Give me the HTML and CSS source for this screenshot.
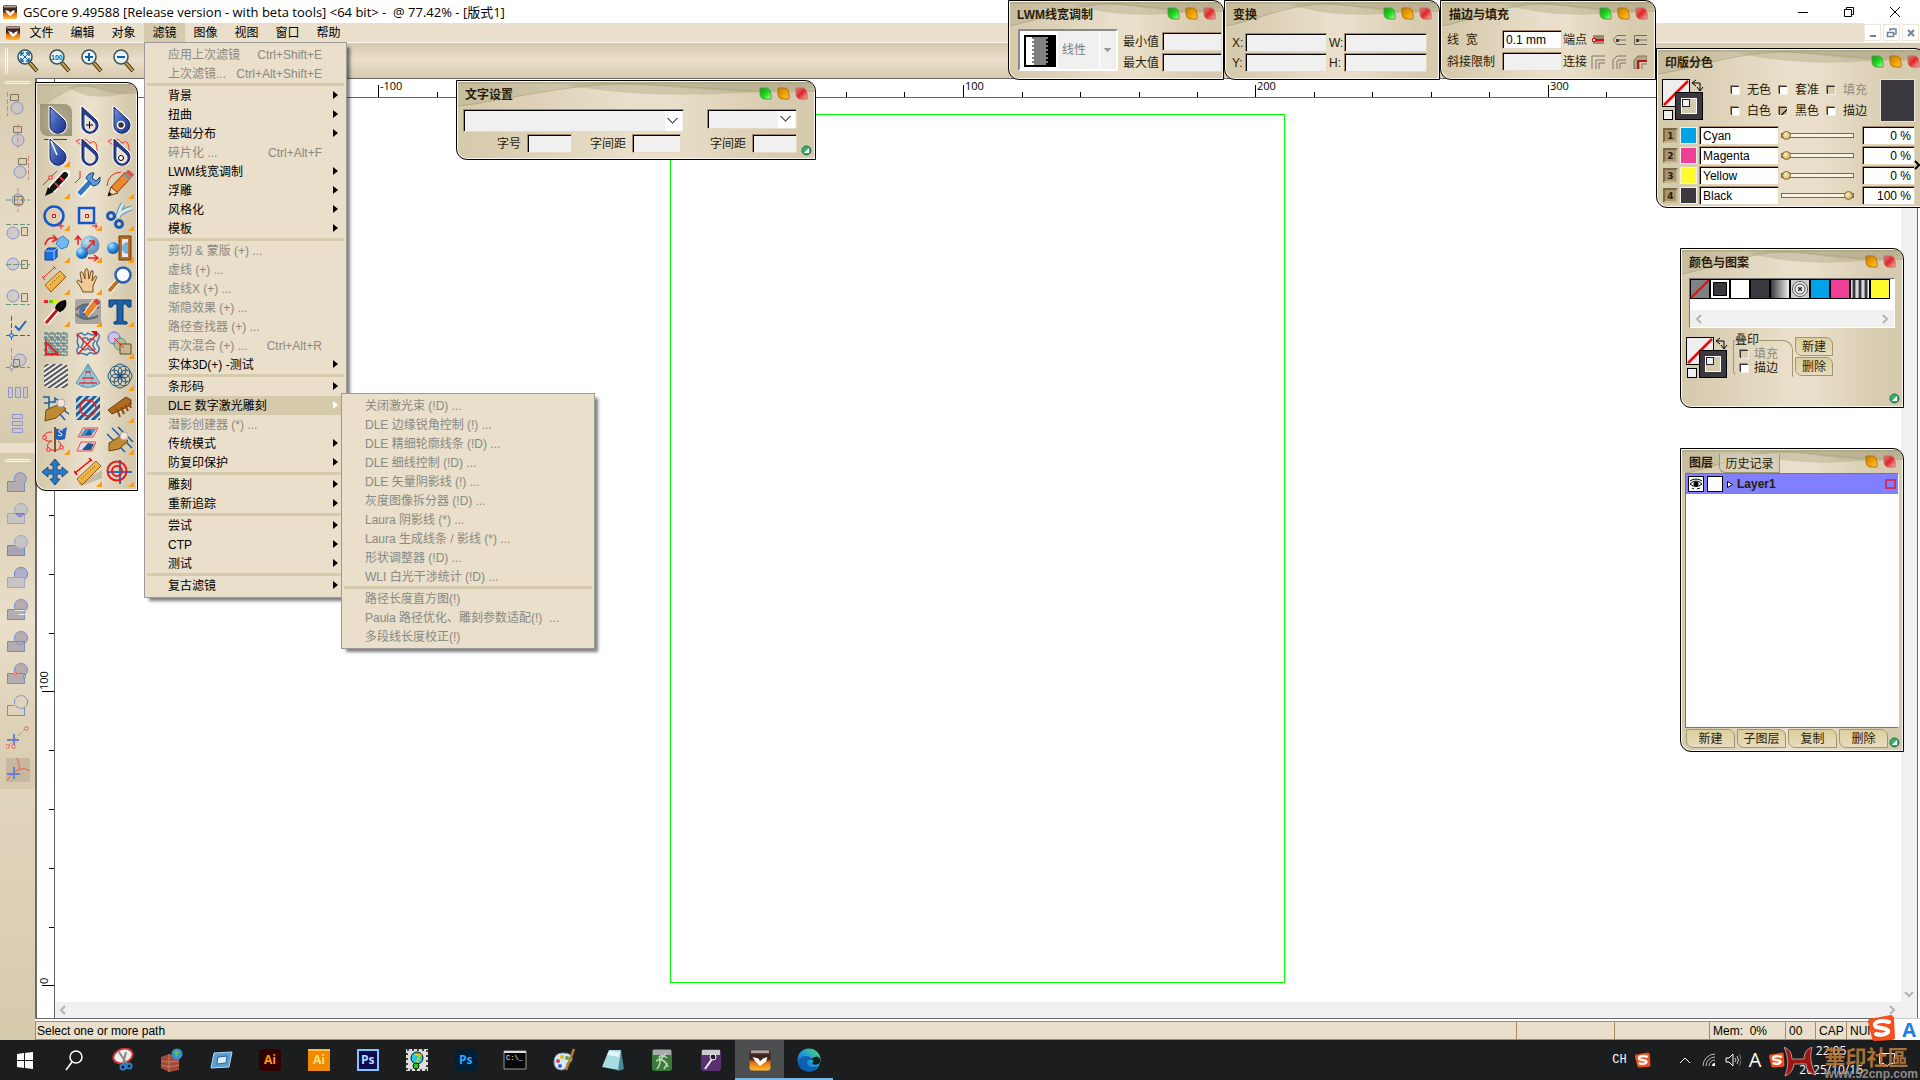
FILE: index.html
```html
<!DOCTYPE html>
<html lang="zh-CN">
<head>
  <meta charset="UTF-8" />
  <title>GSCore</title>
  <link rel="stylesheet" href="styles.css">
</head>
<body>

<!-- shared shapes -->
<svg class="defs" aria-hidden="true">
  <defs>
    <linearGradient id="gBlue" x1="0" y1="0" x2="1" y2="1"><stop offset="0" stop-color="#7a98e0"/><stop offset=".5" stop-color="#3c5cb4"/><stop offset="1" stop-color="#1c2f80"/></linearGradient>
    <linearGradient id="gGreen" x1="0" y1="0" x2="1" y2="1"><stop offset="0" stop-color="#0a9a10"/><stop offset=".6" stop-color="#22e022"/><stop offset="1" stop-color="#c8ffc0"/></linearGradient>
    <linearGradient id="gOrange" x1="0" y1="0" x2="1" y2="1"><stop offset="0" stop-color="#c87800"/><stop offset=".6" stop-color="#f5a400"/><stop offset="1" stop-color="#ffc94a"/></linearGradient>
    <linearGradient id="gRed" x1="0" y1="0" x2="1" y2="1"><stop offset="0" stop-color="#d98080"/><stop offset=".5" stop-color="#e02828"/><stop offset="1" stop-color="#ffb0b0"/></linearGradient>
    <linearGradient id="gApp" x1="0" y1="0" x2="0" y2="1"><stop offset="0" stop-color="#4a3030"/><stop offset=".45" stop-color="#3a2018"/><stop offset=".6" stop-color="#e06a10"/><stop offset="1" stop-color="#ffc030"/></linearGradient>
    <linearGradient id="gSteel" x1="0" y1="0" x2="1" y2="0"><stop offset="0" stop-color="#3a3840"/><stop offset="1" stop-color="#f0f0f0"/></linearGradient>
    <linearGradient id="gWood" x1="0" y1="0" x2="1" y2="1"><stop offset="0" stop-color="#ffdf80"/><stop offset="1" stop-color="#e08a10"/></linearGradient>
    <radialGradient id="gBall" cx=".35" cy=".3" r=".8"><stop offset="0" stop-color="#b8e4ff"/><stop offset=".5" stop-color="#2a8fdc"/><stop offset="1" stop-color="#0a4a98"/></radialGradient>
    <linearGradient id="gEdge" x1="0" y1="1" x2="1" y2="0"><stop offset="0" stop-color="#0c59a4"/><stop offset=".5" stop-color="#1b9de2"/><stop offset="1" stop-color="#5bd858"/></linearGradient>
    <pattern id="hatch" width="4" height="4" patternUnits="userSpaceOnUse" patternTransform="rotate(-35)"><rect width="4" height="4" fill="#eee"/><rect width="4" height="2" fill="#555"/></pattern>
    <pattern id="maze" width="6" height="6" patternUnits="userSpaceOnUse"><path d="M0 1h3v3h3M1 6V3M4 0v2h2" stroke="#2a6a80" fill="none"/></pattern>
    <pattern id="diag" width="5" height="5" patternUnits="userSpaceOnUse" patternTransform="rotate(-45)"><rect width="5" height="3" fill="#1760a8"/></pattern>
  </defs>
  <symbol id="wave" viewBox="0 0 200 26" preserveAspectRatio="none">
    <path d="M0 0H200V10C150 14 120 3 90 2C60 2 30 18 0 25Z" fill="#b5ad8c" opacity=".45"/>
    <path d="M60 3C100 16 140 16 200 6V0H80Z" fill="#a8a080" opacity=".4"/>
    <path d="M0 25C30 18 60 2 95 2C130 3 160 12 200 9" fill="none" stroke="#aca67e" opacity=".8"/>
    <path d="M0 1H200" stroke="#a8a078"/>
  </symbol>
  <symbol id="leafG" viewBox="0 0 13 13"><path d="M1 1h7q4 1 4 6v5H6Q1 12 1 6z" fill="url(#gGreen)" stroke="#5a9a4a"/></symbol>
  <symbol id="leafO" viewBox="0 0 13 13"><path d="M1 1h7q4 1 4 6v5H6Q1 12 1 6z" fill="url(#gOrange)" stroke="#a8741a"/></symbol>
  <symbol id="leafR" viewBox="0 0 13 13"><path d="M1 1h7q4 1 4 6v5H6Q1 12 1 6z" fill="url(#gRed)" stroke="#c06a60"/></symbol>
  <symbol id="gripDot" viewBox="0 0 11 11"><circle cx="5.5" cy="5.5" r="4.5" fill="#3bb070" stroke="#1c6a40"/><path d="M8 3v5H3z" fill="#fff"/></symbol>
  <symbol id="app" viewBox="0 0 16 16"><rect x="1" y="1" width="14" height="14" rx="2" fill="url(#gApp)"/><path d="M2 1.500h12v2H2z" fill="#b0a0a0"/><path d="M3 6l4 1 1 2 2-2 3-1-1 3-4 3-3-3z" fill="#fff"/></symbol>
  <symbol id="drop" viewBox="0 0 28 28"><path d="M8 1V20A8 8 0 1 0 22 14Z" fill="url(#gBlue)" stroke="#fff" stroke-width="3"/><path d="M8 1V20A8 8 0 1 0 22 14Z" fill="url(#gBlue)" stroke="#14205c"/></symbol>
  <symbol id="dropOpen" viewBox="0 0 28 28"><path d="M8 1V20A8 8 0 1 0 22 14Z" fill="#28408f" stroke="#fff" stroke-width="3"/><path d="M8 1V20A8 8 0 1 0 22 14Z" fill="#28408f" stroke="#14205c"/><path d="M11 9V20A5 5 0 1 0 19 16Z" fill="#e9dfca" stroke="#fff"/></symbol>
  <symbol id="lens" viewBox="0 0 24 24"><path d="M14 14l7 8" stroke="#2e2613" stroke-width="4"/><path d="M14 14l7 8" stroke="#c9a04a" stroke-width="2"/><circle cx="9" cy="8" r="7" fill="#e8f4fa" stroke="#3c5050" stroke-width="1.500"/></symbol>
  <symbol id="fillStroke" viewBox="0 0 42 42">
    <rect x=".5" y=".5" width="27" height="27" fill="#eee" stroke="#000"/><path d="M2 26L26 2" stroke="#f00" stroke-width="2.500"/>
    <rect x="13.500" y="13.500" width="27" height="27" fill="#3b383f" stroke="#000"/><rect x="19.500" y="19.500" width="15" height="15" fill="#d6caad" stroke="#fff"/><rect x="20.500" y="20.500" width="7" height="7" fill="#eee" stroke="#222"/>
    <rect x="1.500" y="31.500" width="9" height="9" fill="#eee" stroke="#000"/>
    <path d="M31 4h7v7M34 1l-4 3 4 3M35 8l3 4 3-4" fill="none" stroke="#000"/>
  </symbol>
  <symbol id="shape" viewBox="0 0 24 24"><circle cx="15" cy="8" r="6.500" /><path d="M1.500 11.500h17v10h-17z"/></symbol>
  <symbol id="sogou" viewBox="0 0 28 28"><path d="M1 5L23 1q2 0 3 3l1 19q0 3-3 3L7 27q-3 0-3-3L0 8q0-2 1-3z" fill="#f4511e"/><path d="M21 8q-7-2-12 0-4 2-1 5l10 2q4 2 1 4-4 3-11 1" fill="none" stroke="#fff" stroke-width="4" stroke-linecap="round"/></symbol>
  <symbol id="joinL" viewBox="0 0 14 14"><path d="M1 14V1H14M5 14V5H14M8 14V8H14" fill="none" stroke="currentColor"/></symbol>
</svg>

<div class="app">

<header class="titlebar">
  <svg class="app-icon"><use href="#app"/></svg>
  <h1>GSCore 9.49588 [Release version - with beta tools] &lt;64 bit&gt; -&nbsp; @ 77.42% - [版式1]</h1>
  <div class="window-buttons">
    <button aria-label="Minimize"><svg width="12" height="12"><path d="M1 6.500h10" stroke="#000"/></svg></button>
    <button aria-label="Restore"><svg width="12" height="12"><path d="M1.500 3.500h7v7h-7zM3.500 3V1.500h7v7H9" fill="none" stroke="#000"/></svg></button>
    <button aria-label="Close"><svg width="12" height="12"><path d="M1 1l10 10M11 1L1 11" stroke="#000"/></svg></button>
  </div>
</header>

<nav class="menubar">
  <svg class="app-icon"><use href="#app"/></svg>
  <a href="#">文件</a>
  <a href="#">编辑</a>
  <a href="#">对象</a>
  <div class="menu-holder">
    <a href="#" class="open">滤镜</a>
    <ul class="menu">
      <li class="off">应用上次滤镜<kbd>Ctrl+Shift+E</kbd></li>
      <li class="off">上次滤镜...<kbd>Ctrl+Alt+Shift+E</kbd></li>
      <li class="sep"></li>
      <li class="more">背景</li>
      <li class="more">扭曲</li>
      <li class="more">基础分布</li>
      <li class="off">碎片化 ...<kbd>Ctrl+Alt+F</kbd></li>
      <li class="more">LWM线宽调制</li>
      <li class="more">浮雕</li>
      <li class="more">风格化</li>
      <li class="more">模板</li>
      <li class="sep"></li>
      <li class="off">剪切 &amp; 蒙版 (+) ...</li>
      <li class="off">虚线 (+) ...</li>
      <li class="off">虚线X (+) ...</li>
      <li class="off">渐隐效果 (+) ...</li>
      <li class="off">路径查找器 (+) ...</li>
      <li class="off">再次混合 (+) ...<kbd>Ctrl+Alt+R</kbd></li>
      <li class="more">实体3D(+) -测试</li>
      <li class="sep"></li>
      <li class="more">条形码</li>
      <li class="more active">DLE 数字激光雕刻
        <ul class="menu submenu">
          <li>关闭激光束 (!D) ...</li>
          <li>DLE 边缘锐角控制 (!) ...</li>
          <li>DLE 精细轮廓线条 (!D) ...</li>
          <li>DLE 细线控制 (!D) ...</li>
          <li>DLE 矢量阴影线 (!) ...</li>
          <li>灰度图像拆分器 (!D) ...</li>
          <li>Laura 阴影线 (*) ...</li>
          <li>Laura 生成线条 / 影线 (*) ...</li>
          <li>形状调整器 (!D) ...</li>
          <li>WLI 白光干涉统计 (!D) ...</li>
          <li class="sep"></li>
          <li>路径长度直方图(!)</li>
          <li>Paula 路径优化、雕刻参数适配(!) &nbsp;...</li>
          <li>多段线长度校正(!)</li>
        </ul>
      </li>
      <li class="off">潜影创建器 (*) ...</li>
      <li class="more">传统模式</li>
      <li class="more">防复印保护</li>
      <li class="sep"></li>
      <li class="more">雕刻</li>
      <li class="more">重新追踪</li>
      <li class="sep"></li>
      <li class="more">尝试</li>
      <li class="more">CTP</li>
      <li class="more">测试</li>
      <li class="sep"></li>
      <li class="more">复古滤镜</li>
    </ul>
  </div>
  <a href="#">图像</a>
  <a href="#">视图</a>
  <a href="#">窗口</a>
  <a href="#">帮助</a>
  <div class="mdi-buttons">
    <button aria-label="Minimize document"><svg width="12" height="12"><path d="M3 9h6" stroke="#6f8296" stroke-width="2"/></svg></button>
    <button aria-label="Restore document"><svg width="12" height="12"><path d="M1.500 5.500h6v4h-6zM4 4V2h6v5H8" fill="none" stroke="#6f8296" stroke-width="1.500"/></svg></button>
    <button aria-label="Close document"><svg width="12" height="12"><path d="M3 3l6 6M9 3l-6 6" stroke="#6f8296" stroke-width="2"/></svg></button>
  </div>
</nav>

<div class="toolbar">
  <span class="handle-v"></span>
  <button aria-label="Fit"><svg class="i24"><use href="#lens"/><path d="M6 5l6 6M12 5l-6 6" stroke="#0a62b8"/><path d="M5 7V4h3M10 4h3v3M13 9v3h-3M8 12H5V9" fill="none" stroke="#0a62b8" stroke-width="1.500"/></svg></button>
  <button aria-label="100%"><svg class="i24"><use href="#lens"/><text x="3" y="11" class="lens-text">100</text></svg></button>
  <button aria-label="Zoom in"><svg class="i24"><use href="#lens"/><path d="M5 8h8M9 4v8" stroke="#0a62b8" stroke-width="2"/></svg></button>
  <button aria-label="Zoom out"><svg class="i24"><use href="#lens"/><path d="M5 8h8" stroke="#0a62b8" stroke-width="2"/></svg></button>
</div>

<div class="middle">
  <aside class="dock">
    <div class="dock-group align">
      <span class="handle-h"></span>
      <button aria-label="Align left"><svg class="i24"><path d="M1.500 0V24" class="dash-r"/><path d="M4.500 2.500h8v6h-8z" class="box"/><circle cx="11" cy="16" r="6" class="ball"/></svg></button>
      <button aria-label="Align centre"><svg class="i24"><path d="M7.500 2.500h8v6h-8z" class="box"/><circle cx="12" cy="16" r="6" class="ball"/><path d="M12 0V24" class="dash-r"/></svg></button>
      <button aria-label="Align right"><svg class="i24"><path d="M22.500 0V24" class="dash-r"/><path d="M12.500 2.500h8v6h-8z" class="box"/><circle cx="14" cy="16" r="6" class="ball"/></svg></button>
      <button aria-label="Align both"><svg class="i24"><circle cx="12" cy="12" r="6" class="ball"/><path d="M8.500 8.500h8v8h-8z" class="box"/><path d="M12 0V24" class="dash-r"/><path d="M0 12H24" class="dash-g"/></svg></button>
      <button aria-label="Align top"><svg class="i24"><path d="M0 4.500H24" class="dash-g"/><circle cx="7" cy="13" r="6" class="ball"/><path d="M15.500 7.500h6v8h-6z" class="box"/></svg></button>
      <button aria-label="Align middle"><svg class="i24"><circle cx="7" cy="12" r="6" class="ball"/><path d="M15.500 8.500h6v8h-6z" class="box"/><path d="M0 12.500H24" class="dash-g"/></svg></button>
      <button aria-label="Align bottom"><svg class="i24"><path d="M0 20.500H24" class="dash-g"/><circle cx="7" cy="12" r="6" class="ball"/><path d="M15.500 9.500h6v8h-6z" class="box"/></svg></button>
      <button aria-label="Snap"><svg class="i24"><path d="M5.500 0V24" class="dash-r strong"/><path d="M0 19.500H24" class="dash-g strong"/><path d="M9 10l4 4 7-9" fill="none" stroke="#2a62c0" stroke-width="2"/><path d="M4 18h3v3H4z" fill="#fff" stroke="#06c"/></svg></button>
      <button aria-label="Snap object"><svg class="i24"><path d="M5.500 0V24" class="dash-r"/><path d="M0 19.500H24" class="dash-g"/><circle cx="14" cy="12" r="6" class="ball"/><path d="M7.500 11.500h6v7h-6z" class="box"/><path d="M4 18h3v3H4z" fill="#fff" stroke="#88a"/></svg></button>
      <button aria-label="Distribute horizontally"><svg class="i24"><path d="M2.500 7.500h4v10h-4zM9.500 7.500h5v10h-5zM17.500 7.500h4v10h-4z" class="lav"/></svg></button>
      <button aria-label="Distribute vertically"><svg class="i24"><path d="M6.500 2.500h10v4h-10zM6.500 9.500h10v4h-10zM6.500 16.500h10v4h-10z" class="lav"/></svg></button>
    </div>
    <div class="dock-group paths">
      <span class="handle-h"></span>
      <button aria-label="Unite"><svg class="i24 solid"><path d="M1.500 11.500H9A6 6 0 1 1 18.500 13V21.500H1.500z"/></svg></button>
      <button aria-label="Intersect"><svg class="i24 pale"><use href="#shape"/><path d="M10 11.500h8.500q-5 6-8.500 0z" fill="#9a9ad0" stroke="#6878d0"/></svg></button>
      <button aria-label="Subtract front"><svg class="i24 pale"><path d="M1.500 11.500h17v10h-17z" fill="#a8a4b4" stroke="#7080d0"/><circle cx="15" cy="8" r="6.500"/></svg></button>
      <button aria-label="Subtract back"><svg class="i24 pale"><circle cx="15" cy="8" r="6.500" fill="#aeb0cc" stroke="#7080d0"/><path d="M1.500 11.500h17v10h-17z"/></svg></button>
      <button aria-label="Exclude"><svg class="i24 solid"><use href="#shape"/><path d="M9 12.500h10M12 16.500h7" stroke="#eee"/></svg></button>
      <button aria-label="Divide"><svg class="i24 solid"><use href="#shape"/><path d="M10 12q4 5 9 0" fill="none"/></svg></button>
      <button aria-label="Add points"><svg class="i24 solid"><use href="#shape"/><path d="M8.500 10.500h2v2h-2zM17.500 13.500h2v2h-2z" fill="#fff" stroke="#f06050"/></svg></button>
      <button aria-label="Outline"><svg class="i24 solid"><g fill="none"><path d="M8 11.500H1.500v10h17V13"/><circle cx="15" cy="8" r="6.500" stroke-dasharray="5 1"/></g></svg></button>
      <button aria-label="Cut path"><svg class="i24"><path d="M2 20L20 2" class="dash-r"/><path d="M1 14h12M8 8v12" stroke="#7080d0" stroke-width="2"/><path d="M19 1h3v3h-3zM0 19h3v3H0zM6 19h3v3H6z" fill="#eee" stroke="#f06050"/></svg></button>
      <button aria-label="Cut curve"><svg class="i24 cut"><path d="M11 0q4 9 1 12-6 2-11 11M12 12q6-3 12 1" fill="none" stroke="#f06050"/><path d="M1 16h13M8 9v12" stroke="#7080d0" stroke-width="2"/></svg></button>
    </div>
    <div class="dock-rest"></div>
  </aside>

  <div class="work">
    <main class="view">
      <div class="corner"></div>
      <svg class="ruler-h">
        <path d="M30.500 6V18M323.500 6V18M615.500 6V18M908.500 6V18M1200.500 6V18M1493.500 6V18M1785.500 6V18M89.500 13V18M147.500 13V18M206.500 13V18M264.500 13V18M382.500 13V18M440.500 13V18M499.500 13V18M557.500 13V18M674.500 13V18M732.500 13V18M791.500 13V18M849.500 13V18M967.500 13V18M1025.500 13V18M1084.500 13V18M1142.500 13V18M1259.500 13V18M1317.500 13V18M1376.500 13V18M1434.500 13V18M1551.500 13V18M1610.500 13V18M1668.500 13V18M1727.500 13V18" stroke="#000"/>
        <text x="32" y="11">-200</text><text x="325" y="11">-100</text><text x="617" y="11">0</text><text x="910" y="11">100</text><text x="1202" y="11">200</text><text x="1495" y="11">300</text>
      </svg>
      <svg class="ruler-v">
        <path d="M5 593.500H17M5 887.500H17M12 417.500H17M12 476.500H17M12 535.500H17M12 652.500H17M12 711.500H17M12 770.500H17M12 829.500H17" stroke="#000"/>
        <text transform="translate(11 592) rotate(-90)">100</text><text transform="translate(11 886) rotate(-90)">0</text>
      </svg>
      <section class="canvas"><div class="page"></div></section>
      <div class="vscroll"><svg width="10" height="10"><path d="M1 3l4 4 4-4" class="chev"/></svg></div>
      <div class="hscroll">
        <svg width="10" height="10"><path d="M7 1L3 5l4 4" class="chev"/></svg>
        <svg width="10" height="10"><path d="M3 1l4 4-4 4" class="chev"/></svg>
      </div>
    </main>
    <footer class="statusbar">
      <span class="msg">Select one or more path</span>
      <span class="s98"></span>
      <span class="s95"></span>
      <span class="s76">Mem:&nbsp; 0%</span>
      <span class="s30">00</span>
      <span class="s31">CAP</span>
      <span class="s73">NUM</span>
    </footer>
  </div>
</div>

<!-- floating palettes -->
<section class="panel tools">
  <header><svg class="wave"><use href="#wave"/></svg></header>
  <div class="tool-grid">
    <button class="on" aria-label="Select"><svg><use href="#drop"/></svg></button>
    <button aria-label="Group select"><svg><use href="#dropOpen"/><path d="M12 19h7M15.500 15.500v7" stroke="#000"/></svg></button>
    <button aria-label="Object select"><svg><use href="#drop"/><circle cx="15" cy="19" r="3.500" fill="#333" stroke="#fff" stroke-width="1.500"/></svg></button>

    <button aria-label="Line edit"><svg><path d="M2 1.500H25" stroke="#e00"/><use href="#drop"/><path d="M9 3l6 14" stroke="#fff" stroke-width="1.500"/></svg><i></i></button>
    <button aria-label="Node edit"><svg><path d="M2 3q9-5 14 2-6 6-14-2M16 5q8-6 7 12" fill="none" stroke="#f33"/><use href="#dropOpen"/></svg></button>
    <button aria-label="Node ring"><svg><path d="M2 3q9-5 14 2-6 6-14-2M16 5q8-6 7 12" fill="none" stroke="#f33"/><use href="#dropOpen"/><circle cx="15" cy="20" r="2.500" fill="#fff" stroke="#000"/></svg></button>

    <button aria-label="Pen"><svg><path d="M1 15L15 1" stroke="#e22"/><path d="M7 6h3v3H7z" fill="#fff" stroke="#e22"/><path d="M24 4L10 19" stroke="#fff" stroke-width="9" stroke-linecap="round"/><path d="M23 5L11 18" stroke="#151515" stroke-width="6" stroke-linecap="round"/><path d="M13 13l4 4M18 7l4 4" stroke="#e33" stroke-width="2"/><path d="M3 26l3-9 6 5z" fill="#111"/></svg><i></i></button>
    <button aria-label="Wrench"><svg><path d="M6 1v7L1 13" fill="none" stroke="#e22"/><path d="M5 25L17 11" stroke="#fff" stroke-width="8"/><path d="M5 24L17 11" stroke="#3878c0" stroke-width="5"/><path d="M12 8q3-6 8-5l-2 5 4 3 4-4q1 8-7 9z" fill="#5a9ae0" stroke="#20406a"/></svg></button>
    <button aria-label="Pencil"><svg><path d="M1 16Q2 3 15 2" fill="none" stroke="#e22"/><path d="M22 5L8 20" stroke="#8a4a10" stroke-width="9"/><path d="M21 6L8 20" stroke="#f08a28" stroke-width="7"/><path d="M18 5l5 5M20 3l5 5" stroke="#8a98a0" stroke-width="2"/><path d="M21 1l6 5" stroke="#d85050" stroke-width="4"/><path d="M2 26l3-9 7 6z" fill="#f6d8a8" stroke="#5a3a10"/><path d="M2 26l1-4 3 2z"/></svg><i></i></button>

    <button aria-label="Ellipse"><svg><circle cx="12" cy="14" r="9.500" fill="none" stroke="#1557c8" stroke-width="2.500"/><path d="M10.500 12.500h3v3h-3z" fill="#fff" stroke="#e00"/><path d="M16 24h6M19 21v6" stroke="#e22"/></svg><i></i></button>
    <button aria-label="Rectangle"><svg><path d="M5 6h15v15H5z" fill="none" stroke="#1557c8" stroke-width="2.500"/><path d="M11.500 12.500h3v3h-3z" fill="#fff" stroke="#e00"/><path d="M18 24h6M22 21v6" stroke="#e22"/></svg><i></i></button>
    <button aria-label="Scissors"><svg><path d="M17 2q-4 6-5 14M26 6q-9 2-15 9" stroke="#6a94a0" stroke-width="5" fill="none"/><path d="M17 2q-4 6-5 14M26 6q-9 2-15 9" stroke="#d8e8ea" stroke-width="3" fill="none"/><circle cx="5" cy="14" r="3.500" fill="none" stroke="#1c58b8" stroke-width="3"/><circle cx="13" cy="22" r="3.500" fill="none" stroke="#1c58b8" stroke-width="3"/></svg><i></i></button>

    <button aria-label="Rotate"><svg><path d="M3 11Q6 1 14 5M11 1l4 4-5 3" fill="none" stroke="#e22" stroke-width="1.500"/><path d="M16 5l5-3 6 5-2 6-6 2-5-5z" fill="#70b8f0" stroke="#3a80c0"/><path d="M3 17l3-3h9v9l-3 3H3z" fill="#1a70e0" stroke="#0a3a90"/><path d="M3 17h9v9M12 17l3-3" fill="none" stroke="#a0d0ff"/></svg><i></i></button>
    <button aria-label="Scale"><svg><circle cx="16" cy="11" r="9.500" fill="url(#gBall)" opacity=".6"/><circle cx="8" cy="19" r="6" fill="url(#gBall)"/><path d="M4 11V3M1 6l3-4 3 4M12 16l7-8M15 7h5v5M14 24h10M20 21l4 3-4 3" fill="none" stroke="#e22" stroke-width="1.500"/></svg><i></i></button>
    <button aria-label="Mirror"><svg><path d="M13 2h12v24H13z" fill="#b86a24" stroke="#6a3a10"/><path d="M16 5h6v18h-6z" fill="#e8eaf0"/><circle cx="7" cy="14" r="6" fill="url(#gBall)"/><path d="M22 8a6 6 0 0 0 0 12z" fill="#70b0e0"/></svg><i></i></button>

    <button aria-label="Ruler"><svg><path d="M1 12L13 1M0 10l3 4M11 0l3 3" stroke="#e22"/><path d="M3 19L18 5l6 6L9 26z" fill="url(#gWood)" stroke="#a05a10"/><path d="M8 19l10-10" stroke="#503000" stroke-dasharray="1 2"/></svg><i></i></button>
    <button aria-label="Hand"><svg><path d="M9 26q-2-5-6-10 0-3 3-1l2 2L6 7q1-3 3 0l2 6V4q2-3 3 0l1 9 2-8q3-1 2 2l-1 8 3-5q3 0 1 3l-3 7v6z" fill="#f0cc94" stroke="#704a20"/></svg><i></i></button>
    <button aria-label="Zoom"><svg><path d="M12 15L3 25" stroke="#fff" stroke-width="6"/><path d="M12 15L3 25" stroke="#c07020" stroke-width="4"/><circle cx="17" cy="9" r="7.500" fill="#f4faff" stroke="#2a60b0" stroke-width="2.500"/></svg></button>

    <button aria-label="Eyedropper"><svg><path d="M2 2h4v3H2z" fill="#e22"/><path d="M7 2h4v3H7z" fill="#5c2"/><path d="M12 2h4v3h-4z" fill="#ee0"/><path d="M4 25l12-14" stroke="#fff" stroke-width="6"/><path d="M4 25l12-14" stroke="#c01818" stroke-width="3"/><path d="M14 10q2-6 9-7 2 6-5 10z" fill="#111" stroke="#000" stroke-width="2"/></svg><i></i></button>
    <button aria-label="Image edit"><svg><rect x="1" y="1" width="26" height="25" rx="3" fill="#a8a49e"/><circle cx="12" cy="14" r="7" fill="#5478a8"/><circle cx="12" cy="14" r="3"/><path d="M2 12Q10 2 25 10M2 16q9 9 22 2" fill="none" stroke="#666" stroke-width="2"/><path d="M22 4L12 17" stroke="#fff" stroke-width="8"/><path d="M22 4L12 17" stroke="#e8862a" stroke-width="6"/><path d="M21 2l4 4" stroke="#d04040" stroke-width="4"/></svg><i></i></button>
    <button aria-label="Text"><svg><path d="M3 2h22v7h-3l-2-3h-3v17l4 1v2H8v-2l3-1V6H8L6 9H3z" fill="#1c60a8" stroke="#0c3a70"/></svg><i></i></button>

    <button aria-label="Pattern"><svg><path d="M2 2h24v24H2z" fill="url(#maze)"/><path d="M4 12v12h12z" fill="none" stroke="#e22" stroke-width="2"/></svg></button>
    <button aria-label="Pattern erase"><svg fill="none"><path d="M4 8q-3-5 4-5 2 4 6 0 5 4 9 0 4 2 1 7-3 4 1 7 1 6-5 7-4-3-7 1-6-3-9-1-3-4 1-7-3-5-1-9zM8 9q5-3 6 1 5-3 7 1-4 4 0 8-5 3-7-1-4 4-7-1 4-4 1-8z" stroke="#3c7cb0" stroke-width="1.500"/><path d="M3 4l20 20M24 3L4 24" stroke="#e22" stroke-width="1.500"/><path d="M17 1h6v6z" fill="#e00"/></svg></button>
    <button aria-label="Blend"><svg><circle cx="8" cy="8" r="6" fill="#c8c4ec" stroke="#6a70c8"/><circle cx="14" cy="14" r="6" fill="#a0c0a0" opacity=".8" stroke="#408050"/><path d="M14 14h11v10H14z" fill="#c8b890" stroke="#604a20"/><path d="M8 8l10 10" stroke="#e22"/></svg><i></i></button>

    <button aria-label="Hatching"><svg><rect x="2" y="2" width="24" height="24" rx="4" fill="url(#hatch)"/></svg></button>
    <button aria-label="Cone"><svg><path d="M14 2L26 21q-12 9-24 0z" fill="#8ac4dc" opacity=".8" stroke="#3a80a8"/><path d="M14 2L9 24M14 2l5 22" stroke="#5aa0c0"/><path d="M11 10h6M8 16h12M5 21h18" stroke="#e33" stroke-width="1.500"/></svg></button>
    <button aria-label="Guilloche"><svg fill="none" stroke="#1e527c"><circle cx="14" cy="8" r="6"/><circle cx="14" cy="20" r="6"/><circle cx="8" cy="14" r="6"/><circle cx="20" cy="14" r="6"/><circle cx="10" cy="10" r="6"/><circle cx="18" cy="10" r="6"/><circle cx="10" cy="18" r="6"/><circle cx="18" cy="18" r="6"/></svg><i></i></button>

    <button aria-label="Smudge"><svg><path d="M1 3h6v5h6V4l6 5v5l8 6M2 9h5v5M18 20l5 6" fill="none" stroke="#1760a8" stroke-width="1.500"/><path d="M4 16l14-6 6 5-10 9-11 3z" fill="#c08a34" stroke="#6a4810"/><circle cx="19" cy="9" r="4" fill="#f8e4dc" stroke="#aaa"/></svg></button>
    <button aria-label="Line region"><svg><path d="M2 2h24v24H2z" fill="url(#diag)"/><circle cx="14" cy="14" r="8" fill="none" stroke="#e22" stroke-width="1.500"/></svg></button>
    <button aria-label="Comb"><svg><path d="M2 16L20 3l5 3v5L6 20z" fill="#b06a20" stroke="#6a3a08"/><path d="M11 15l3 8M15 13l3 7M19 11l3 6M23 9l2 5" stroke="#8a4a10" stroke-width="2"/></svg><i></i></button>

    <button aria-label="Flag"><svg><path d="M13 1v25" stroke="#805030" stroke-width="2"/><path d="M13 2q6 3 12-1l-2 12q-5 2-10 0z" fill="#2060b8"/><path d="M21 4q-5-1-4 2l3 2q0 3-4 1" fill="none" stroke="#fff"/><path d="M10 6q-8 0-8 5t8 4q-7 2-3 9h9q6-5 0-9" fill="none" stroke="#e22"/><path d="M1 10h3v3H1zM5 22h3v3H5zM18 20h3v3h-3z" fill="#fff" stroke="#e22"/></svg><i></i></button>
    <button aria-label="Distort"><svg><path d="M9 2h15l-5 9H4zM7 16h15l-4 9H3z" fill="#d8e0ec" stroke="#e44"/><path d="M11 3h11l-5 7H6z" fill="#4a90c0"/><path d="M8 24l6-7 6 1-3 6z" fill="#1a5a90"/><path d="M11 9l5-6 2 6z" fill="#1a5a90"/></svg></button>
    <button aria-label="Smear lines"><svg><path d="M6 2l20 20M12 1l15 15M1 8l18 18" stroke="#1760a8" stroke-width="1.500"/><path d="M3 17l13-8 6 6-9 8-10 2z" fill="#c08a34" stroke="#6a4810"/><circle cx="18" cy="10" r="4" fill="#f8e4dc" stroke="#aaa"/></svg><i></i></button>

    <button aria-label="Move"><svg><path d="M13 1l5 6h-3v5h5V9l6 5-6 5v-3h-5v5h3l-5 6-5-6h3v-5H6v3l-6-5 6-5v3h5V7H8z" fill="#2a78c8" stroke="#174a80"/></svg></button>
    <button aria-label="Measure"><svg><path d="M4 26L28 12v8L8 28z" fill="#8a8a70" opacity=".4"/><path d="M1 15L17 2M0 13l3 4M15 0l3 3" stroke="#e00" stroke-width="1.500"/><path d="M3 21L22 3l5 5L8 27z" fill="url(#gWood)" stroke="#a05a10"/><path d="M7 21L21 8" stroke="#503000" stroke-dasharray="1 2"/></svg><i></i></button>
    <button aria-label="Register"><svg><path d="M2 14h24M14 2v24" stroke="#2a70c8" stroke-width="2"/><circle cx="11" cy="13" r="9.500" fill="none" stroke="#e81818" stroke-width="2"/><circle cx="11" cy="13" r="5" fill="none" stroke="#e81818" stroke-width="2"/></svg><i></i></button>
  </div>
</section>

<section class="panel text-panel">
  <header><svg class="wave"><use href="#wave"/></svg><h2>文字设置</h2><button aria-label="Pin"><svg><use href="#leafG"/></svg></button><button aria-label="Roll up"><svg><use href="#leafO"/></svg></button><button aria-label="Close"><svg><use href="#leafR"/></svg></button></header>
  <div class="text-row">
    <select class="combo font" aria-label="Font"><option></option></select>
    <select class="combo style" aria-label="Style"><option></option></select>
  </div>
  <div class="text-row fields">
    <label>字号 <input type="text"></label>
    <label>字间距 <input type="text"></label>
    <label>字间距 <input type="text"></label>
  </div>
  <svg class="grip"><use href="#gripDot"/></svg>
</section>

<section class="panel lwm">
  <header><svg class="wave"><use href="#wave"/></svg><h2>LWM线宽调制</h2><button aria-label="Pin"><svg><use href="#leafG"/></svg></button><button aria-label="Roll up"><svg><use href="#leafO"/></svg></button><button aria-label="Close"><svg><use href="#leafR"/></svg></button></header>
  <div class="lwm-body">
    <div class="mode">
      <svg width="38" height="38"><rect width="38" height="38" fill="#fff"/><rect x="4" y="4" width="32" height="32" fill="#000"/><rect x="6" y="6" width="10" height="28" fill="#fff"/><path d="M14 6h12v28H14z" fill="#808080"/><path d="M13 6v28" stroke="#808080" stroke-width="2" stroke-dasharray="2 2"/><path d="M27 6v28" stroke="#808080" stroke-width="2" stroke-dasharray="2 2"/></svg>
      <select aria-label="Mode"><option>线性</option></select>
    </div>
    <div class="pairs">
      <label>最小值 <input type="text"></label>
      <label>最大值 <input type="text"></label>
    </div>
  </div>
</section>

<section class="panel transform">
  <header><svg class="wave"><use href="#wave"/></svg><h2>变换</h2><button aria-label="Pin"><svg><use href="#leafG"/></svg></button><button aria-label="Roll up"><svg><use href="#leafO"/></svg></button><button aria-label="Close"><svg><use href="#leafR"/></svg></button></header>
  <div class="xywh">
    <label for="tx">X:</label><input type="text" id="tx">
    <label for="tw">W:</label><input type="text" id="tw">
    <label for="ty">Y:</label><input type="text" id="ty">
    <label for="th">H:</label><input type="text" id="th">
  </div>
</section>

<section class="panel stroke">
  <header><svg class="wave"><use href="#wave"/></svg><h2>描边与填充</h2><button aria-label="Pin"><svg><use href="#leafG"/></svg></button><button aria-label="Roll up"><svg><use href="#leafO"/></svg></button><button aria-label="Close"><svg><use href="#leafR"/></svg></button></header>
  <div class="stroke-grid">
    <label for="lw">线&nbsp; 宽</label><input type="text" id="lw" class="live" value="0.1 mm">
    <span>端点</span>
    <button aria-label="Butt cap"><svg width="14" height="14"><path d="M2 2h11v9H2z" fill="#9a8a78"/><path d="M2 7h11" stroke="#e00" stroke-width="2"/><path d="M1.500 5.500h3v3h-3z" fill="#fff" stroke="#e00"/></svg></button>
    <button aria-label="Round cap"><svg width="14" height="14"><path d="M14 2.500H5L1 7l4 4.500h9M4 7h10" fill="none" stroke="#7a6a5a"/><path d="M4 6h3v3H4z" fill="#345"/></svg></button>
    <button aria-label="Square cap"><svg width="14" height="14"><path d="M14 2.500H1.500v9H14M4 7h10" fill="none" stroke="#7a6a5a"/><path d="M3 6h3v3H3z" fill="#345"/></svg></button>
    <label for="ml">斜接限制</label><input type="text" id="ml">
    <span>连接</span>
    <button aria-label="Miter join"><svg class="join"><use href="#joinL"/></svg></button>
    <button aria-label="Round join"><svg class="join"><path d="M1 14V5l4-4h9M5 14V6l1-1h8M8 14V8h6" fill="none" stroke="currentColor"/></svg></button>
    <button aria-label="Bevel join"><svg class="join"><path d="M1 14V5l4-4h9v5H6v8z" fill="#b0a48c" stroke="currentColor"/><path d="M5 14V6h9" fill="none" stroke="#b01818" stroke-width="2"/><path d="M9 14V9h5" fill="none" stroke="currentColor"/></svg></button>
  </div>
</section>

<section class="panel plates">
  <header><svg class="wave"><use href="#wave"/></svg><h2>印版分色</h2><button aria-label="Pin"><svg><use href="#leafG"/></svg></button><button aria-label="Roll up"><svg><use href="#leafO"/></svg></button><button aria-label="Close"><svg><use href="#leafR"/></svg></button></header>
  <div class="plates-top">
    <svg class="fs"><use href="#fillStroke"/></svg>
    <div class="checks">
      <label><input type="checkbox">无色</label>
      <label><input type="checkbox">套准</label>
      <label class="dim"><input type="checkbox" disabled>填充</label>
      <label><input type="checkbox">白色</label>
      <label><input type="checkbox" checked>黑色</label>
      <label><input type="checkbox">描边</label>
    </div>
    <span class="current"></span>
  </div>
  <div class="inks">
    <button>1</button><span class="chip cyan"></span><input type="text" class="live" value="Cyan" aria-label="Ink 1"><input type="range" value="0" aria-label="Cyan amount"><input type="text" class="live num" value="0 %" aria-label="Cyan percent">
    <button>2</button><span class="chip magenta"></span><input type="text" class="live" value="Magenta" aria-label="Ink 2"><input type="range" value="0" aria-label="Magenta amount"><input type="text" class="live num" value="0 %" aria-label="Magenta percent">
    <button>3</button><span class="chip yellow"></span><input type="text" class="live" value="Yellow" aria-label="Ink 3"><input type="range" value="0" aria-label="Yellow amount"><input type="text" class="live num" value="0 %" aria-label="Yellow percent">
    <button>4</button><span class="chip black"></span><input type="text" class="live" value="Black" aria-label="Ink 4"><input type="range" value="100" aria-label="Black amount"><input type="text" class="live num" value="100 %" aria-label="Black percent">
  </div>
  <svg class="expand"><path d="M1 1l4 4-4 4" fill="none" stroke="#000" stroke-width="2"/></svg>
</section>

<section class="panel colors">
  <header><svg class="wave"><use href="#wave"/></svg><h2>颜色与图案</h2><button aria-label="Roll up"><svg><use href="#leafO"/></svg></button><button aria-label="Close"><svg><use href="#leafR"/></svg></button></header>
  <div class="swatch-box">
    <div class="swatches">
      <button aria-label="None"><svg><path d="M0 0h18v18H0z" fill="#808080"/><path d="M0 18L18 0" stroke="#f00" stroke-width="2"/></svg></button>
      <button aria-label="Registration"><svg><path d="M0 0h18v18H0z" fill="#fff"/><path d="M2.500 2.500h13v13h-13z" fill="#3b383f" stroke="#000"/></svg></button>
      <button class="white" aria-label="White"></button>
      <button class="black" aria-label="Black"></button>
      <button aria-label="Linear gradient"><svg><path d="M0 0h18v18H0z" fill="url(#gSteel)"/></svg></button>
      <button aria-label="Radial pattern"><svg><path d="M0 0h18v18H0z" fill="#ccc"/><circle cx="9" cy="9" r="7.500" fill="#fff" stroke="#555"/><circle cx="9" cy="9" r="5" fill="none" stroke="#777" stroke-width="1.500"/><circle cx="9" cy="9" r="2.500" fill="#888"/><path d="M7 7l4 4M11 7l-4 4" stroke="#333"/></svg></button>
      <button class="cyan" aria-label="Cyan"></button>
      <button class="magenta" aria-label="Magenta"></button>
      <button aria-label="Stripes"><svg><path d="M0 0h18v18H0z" fill="#f4f4f4"/><path d="M3 0v18M9 0v18M15 0v18" stroke="#3b383f" stroke-width="3"/><path d="M0 0v18M6 0v18M12 0v18" stroke="#bbb"/></svg></button>
      <button class="yellow" aria-label="Yellow"></button>
    </div>
    <div class="swatch-scroll">
      <svg width="10" height="10"><path d="M7 1L3 5l4 4" class="chev"/></svg>
      <svg width="10" height="10"><path d="M3 1l4 4-4 4" class="chev"/></svg>
    </div>
  </div>
  <div class="colors-bottom">
    <svg class="fs"><use href="#fillStroke"/></svg>
    <fieldset>
      <legend>叠印</legend>
      <label class="dim"><input type="checkbox" disabled>填充</label>
      <label><input type="checkbox">描边</label>
    </fieldset>
    <div class="stack">
      <button class="btn">新建</button>
      <button class="btn">删除</button>
    </div>
  </div>
  <svg class="grip"><use href="#gripDot"/></svg>
</section>

<section class="panel layers">
  <header><svg class="wave"><use href="#wave"/></svg><h2>图层</h2><a href="#" class="tab">历史记录</a><button aria-label="Roll up"><svg><use href="#leafO"/></svg></button><button aria-label="Close"><svg><use href="#leafR"/></svg></button></header>
  <div class="layer-list">
    <div class="layer">
      <button aria-label="Visible"><svg width="14" height="14"><path d="M1 7q6-6 12 0-6 5-12 0z" fill="#fff" stroke="#000"/><circle cx="7" cy="7" r="2.500"/><path d="M1 4q6-4 12 0M3 11l2 1M8 12l3-1" fill="none" stroke="#000"/></svg></button>
      <button aria-label="Lock"></button>
      <svg width="8" height="9"><path d="M1.500 1.500l5 3-5 3z" fill="#fff" stroke="#000"/></svg>
      <strong>Layer1</strong>
      <span class="mark"></span>
    </div>
  </div>
  <div class="layer-buttons">
    <button class="btn">新建</button>
    <button class="btn">子图层</button>
    <button class="btn">复制</button>
    <button class="btn">删除</button>
  </div>
  <svg class="grip"><use href="#gripDot"/></svg>
</section>

<footer class="taskbar">
  <button aria-label="Start"><svg><path d="M4 6l7-1v7H4zM12 5l8-1v8h-8zM4 13h7v7l-7-1zM12 13h8v8l-8-1z" fill="#fff"/></svg></button>
  <button aria-label="Search"><svg><circle cx="14" cy="9" r="6" fill="none" stroke="#fff" stroke-width="1.500"/><path d="M10 14l-6 8" stroke="#fff" stroke-width="1.500"/></svg></button>
  <button aria-label="Snip"><svg><ellipse cx="12" cy="8" rx="10" ry="7" fill="#eee" stroke="#d03030" stroke-width="2" transform="rotate(-20 12 8)"/><path d="M8 4l8 12M15 4l-3 12" stroke="#888" stroke-width="2"/><circle cx="12" cy="19" r="2.500" fill="none" stroke="#2a80d0" stroke-width="2"/><circle cx="18" cy="18" r="2.500" fill="none" stroke="#2a80d0" stroke-width="2"/></svg></button>
  <button aria-label="Firewall"><svg><path d="M1 9l8-3 10 2v14L9 24l-8-4z" fill="#a04a38"/><path d="M1 13l8 1 10-1M1 17l8 2 10-2M9 6v18" stroke="#c87868" fill="none"/><circle cx="17" cy="6" r="5.500" fill="#3a90d8"/><path d="M13 4q4-3 6 0l-2 5z" fill="#5cc040"/></svg></button>
  <button aria-label="Run"><svg><path d="M5 5l18-1-3 15-18 1z" fill="#5a9fd4" stroke="#b8dcf4"/><path d="M9 9l9-1-1 7-9 1z" fill="#dcecf8" stroke="#2a6098"/></svg></button>
  <button aria-label="Illustrator"><svg><rect x="1" y="1" width="22" height="22" rx="4" fill="#330000"/><text x="6" y="16" class="logo" fill="#ff9a00">Ai</text></svg></button>
  <button aria-label="Illustrator CS"><svg><path d="M1 2h22v21H1z" fill="#f08a00"/><path d="M1 2h22" stroke="#ffc040" stroke-width="2"/><text x="6" y="16" class="logo" fill="#ffe08a">Ai</text></svg></button>
  <button aria-label="Photoshop CS"><svg><path d="M2 2h20v20H2z" fill="#0c0c50" stroke="#8ac4f4" stroke-width="2"/><text x="5" y="16" class="logo" fill="#b8dcff">Ps</text></svg></button>
  <button aria-label="Tool"><svg><path d="M1 1h22v22H1z" fill="#ddd"/><path d="M2 2h20v20H2z" fill="none" stroke="#444" stroke-dasharray="2 3" stroke-width="2"/><circle cx="12" cy="10" r="6" fill="#18d0e8" stroke="#111"/><path d="M10 7h5l-4 9" fill="none" stroke="#e0c010" stroke-width="2"/><circle cx="11" cy="18" r="3" fill="#2c2" stroke="#111"/></svg></button>
  <button aria-label="Photoshop"><svg><rect x="1" y="1" width="22" height="22" rx="4" fill="#001e36"/><text x="5" y="16" class="logo" fill="#31a8ff">Ps</text></svg></button>
  <button aria-label="Command prompt"><svg><path d="M1 3h22v18H1z" fill="#080808" stroke="#999"/><path d="M1 4h22" stroke="#ddd" stroke-width="2"/><text x="3" y="12" class="cmd">C:\_</text></svg></button>
  <button aria-label="Paint"><svg><path d="M2 14q0-9 9-9 10 0 9 7-1 3-5 3 0 7-6 7-7-1-7-8z" fill="#d8e8f4" stroke="#7a98b0"/><circle cx="6" cy="13" r="2" fill="#e04040"/><circle cx="10" cy="9" r="2" fill="#f0b020"/><circle cx="15" cy="10" r="2" fill="#40b040"/><circle cx="8" cy="18" r="2" fill="#4060d0"/><path d="M22 1L14 22" stroke="#c07828" stroke-width="2.500"/></svg></button>
  <button aria-label="Notepad"><svg><path d="M8 2h12l3 19-6 2z" fill="#4a8a98"/><path d="M8 2h12l-3 20-16-3z" fill="#a8dce4"/><path d="M8 3l11 1-1 5-12-2z" fill="#e4f6f8"/></svg></button>
  <button aria-label="GS green"><svg><rect x="2" y="1" width="20" height="22" rx="3" fill="#3c7a3c"/><path d="M3 2h18v5H3z" fill="#aaa"/><path d="M7 21q5-6 2-12M9 9q4-3 8 1M16 5l-5 6 6 5-3 5M6 13q8-4 12 6" fill="none" stroke="#b8dcb8" stroke-width="1.500"/></svg></button>
  <button aria-label="GS violet"><svg><rect x="2" y="1" width="20" height="22" rx="3" fill="#5a3070"/><path d="M3 2h18v5H3z" fill="#ccc"/><circle cx="14" cy="9" r="3" fill="#222" stroke="#fff"/><path d="M13 11l-7 10" stroke="#eee" stroke-width="2"/></svg></button>
  <button class="current" aria-label="GSCore"><svg viewBox="0 0 16 16"><use href="#app"/></svg></button>
  <button class="running" aria-label="Edge"><svg><circle cx="12" cy="12" r="11.500" fill="url(#gEdge)"/><path d="M1 14Q3 8 9 8q5 0 6 4-5-1-5 3 1 6 11 3-4 7-12 5-8-2-8-9z" fill="#0e5fb0"/><path d="M14 11q4 1 1 5 5 2 8-1v-4q-2-5-9 0z" fill="#1b1d1e"/></svg></button>

  <div class="tray">
    <span class="lang">CH</span>
    <svg class="s16"><use href="#sogou"/></svg>
    <svg class="s16 up"><path d="M3 11l5-5 5 5" fill="none" stroke="#fff"/></svg>
    <svg class="s16"><path d="M2 14A12 12 0 0 1 14 2M5 14a9 9 0 0 1 9-9M8 14a6 6 0 0 1 6-6" fill="none" stroke="#bbb"/><path d="M11 14a3 3 0 0 1 3-3v3z" fill="#fff"/></svg>
    <svg class="s16"><path d="M1 6h3l4-4v12l-4-4H1z" fill="none" stroke="#fff"/><path d="M10 6q2 2 0 4M12 4q3 4 0 8" fill="none" stroke="#ccc"/><path d="M14 2q4 6 0 12" fill="none" stroke="#777"/></svg>
    <span class="ime">A</span>
    <svg class="s16"><use href="#sogou"/></svg>
    <time>22:05<br>2025/10/16</time>
    <svg class="s16 note"><path d="M.500 1.500h15v10h-5L8 14.500l-3-3H.500z" fill="none" stroke="#fff"/></svg>
  </div>
</footer>

<div class="ime-bar"><svg><use href="#sogou"/></svg><span>A</span></div>

<div class="stamp">
  <svg viewBox="0 0 32 30"><path d="M0 0q8 3 8 12h12q0-9 8-12-4 14 4 28-10-2-10-11H10q-1 9-9 12Q7 14 0 0z" fill="#a01414" stroke="#c8b8b0" stroke-width=".8"/></svg>
  <div><b>華印社區</b><small>www.52cnp.com</small></div>
</div>

</div>
</body>
</html>
```

FILE: styles.css
```css
* {
  box-sizing: border-box;
}
body {
  margin: 0;
  font-family: "Liberation Sans", "Noto Sans CJK SC", sans-serif;
  font-size: 12px;
  line-height: 14px;
  color: #000;
  background: #fff;
}
button {
  margin: 0;
  padding: 0;
  border: 0;
  background: none;
  font: inherit;
  color: inherit;
  display: flex;
  align-items: center;
  justify-content: center;
}
a {
  color: inherit;
  text-decoration: none;
}
ul {
  list-style: none;
  margin: 0;
  padding: 0;
}
h1, h2 {
  margin: 0;
  font-size: 12px;
}
svg {
  display: block;
  flex: none;
}
.defs {
  position: absolute;
  width: 0;
  height: 0;
}
.app {
  position: relative;
  height: 100vh;
  display: flex;
  flex-direction: column;
  overflow: hidden;
}
.app-icon {
  width: 16px;
  height: 16px;
}
.i24 {
  width: 24px;
  height: 24px;
}
.chev {
  fill: none;
  stroke: #b4b4b4;
  stroke-width: 2;
}

/* title bar */
.titlebar {
  height: 23px;
  display: flex;
  align-items: center;
  gap: 5px;
  padding-left: 2px;
  background: #fff;
}
.titlebar h1 {
  font-family: "Open Sans", "Noto Sans CJK SC", sans-serif;
  font-size: 13px;
  font-weight: normal;
}
.window-buttons {
  margin-left: auto;
  display: flex;
  padding-right: 2px;
}
.window-buttons button {
  width: 46px;
  height: 20px;
}

/* menu bar */
.menubar {
  height: 20px;
  display: flex;
  align-items: stretch;
  padding-left: 5px;
  background: #e9dfca;
  border-bottom: 1px solid #f8f5ee;
}
.menubar > .app-icon {
  margin-top: 2px;
}
.menubar > a,
.menu-holder > a {
  width: 41px;
  height: 19px;
  line-height: 21px;
  text-align: center;
  display: block;
}
.menu-holder {
  position: relative;
}
.menu-holder > .open {
  background: #d6caad;
}
.mdi-buttons {
  margin-left: auto;
  display: flex;
  gap: 2px;
  padding: 1px 1px 1px 0;
  background: #fff;
}
.mdi-buttons button {
  width: 17px;
  border: 1px solid #ece6da;
  background: #fff;
}

.menu {
  position: absolute;
  z-index: 10;
  top: 19px;
  left: 0;
  width: 203px;
  padding: 2px;
  background: #e9dfca;
  border: 1px solid #9a9a9a;
  box-shadow: 4px 4px 3px -1px rgba(0, 0, 0, 0.5);
}
.menu li {
  position: relative;
  height: 19px;
  line-height: 21px;
  padding: 0 22px 0 21px;
  display: flex;
  justify-content: space-between;
  white-space: nowrap;
}
.menu kbd {
  font: inherit;
}
.menu li.sep {
  height: 3px;
  background: #d6caad;
}
.menu .off,
.submenu li {
  color: #8a8984;
}
.menu .more::after {
  content: "";
  position: absolute;
  right: 6px;
  top: 5px;
  border: 4px solid transparent;
  border-left: 5px solid #000;
  border-right: 0;
}
.menu .active {
  background: #d6caad;
}
.menu .active::after {
  border-left-color: #fff;
}
.submenu {
  top: -3px;
  left: 194px;
  width: 254px;
  z-index: 11;
}

/* toolbar */
.toolbar {
  height: 35px;
  display: flex;
  align-items: center;
  gap: 8px;
  padding-left: 5px;
  background: linear-gradient(#d6caad, #e9dfca 50%, #d6caad);
}
.handle-v {
  width: 3px;
  height: 26px;
  border: 1px solid #fbf8f0;
  border-radius: 2px;
}
.lens-text {
  font-size: 7px;
  font-weight: bold;
  fill: #0a62b8;
}

/* left dock */
.middle {
  flex: 1;
  min-height: 0;
  display: flex;
}
.dock {
  width: 35px;
  flex: none;
  display: flex;
  flex-direction: column;
  gap: 10px;
  background: #e9dfca;
}
.dock-group {
  display: flex;
  flex-direction: column;
  align-items: center;
  gap: 8px;
  padding: 3px 2px 7px;
  background: linear-gradient(#d6caad, #e9dfca 50%, #d6caad);
}
.paths {
  padding-top: 6px;
}
.dock-rest {
  flex: 1;
  margin-top: -10px;
  background: linear-gradient(#e0d5bd, #d6caad);
}
.handle-h {
  width: 27px;
  height: 3px;
  border: 1px solid #fbf8f0;
  border-radius: 2px;
}
.dash-r {
  fill: none;
  stroke: #d88080;
  stroke-dasharray: 5 2;
}
.dash-r.strong {
  stroke: #f02020;
}
.dash-g {
  stroke: #6a9a78;
  stroke-dasharray: 5 2;
}
.dash-g.strong {
  stroke: #208040;
}
.box {
  fill: #d6caad;
  fill-opacity: 0.4;
  stroke: #80785c;
}
.ball {
  fill: #c4c4cc;
  fill-opacity: 0.7;
  stroke: #8a90cc;
}
.lav {
  fill: #cec8c4;
  stroke: #9292cc;
}
.solid {
  fill: #b4adb0;
  stroke: #7a86d0;
}
.pale {
  fill: #c8c4c4;
  stroke: #a0a4cc;
}
.cut {
  background: #c4b8a0;
}

/* document view */
.work {
  flex: 1;
  min-width: 0;
  display: flex;
  flex-direction: column;
  background: #fff;
}
.view {
  flex: 1;
  min-height: 0;
  margin-right: 2px;
  display: grid;
  grid-template-columns: 18px minmax(0, 1fr) 16px;
  grid-template-rows: 19px minmax(0, 1fr) 16px;
  border: solid #6a6a6a;
  border-width: 1px 1px 1px 2px;
}
.corner {
  border-right: 1px solid #666;
}
.ruler-h {
  width: 100%;
  height: 19px;
  grid-column: 2 / 4;
  border-bottom: 1px solid #666;
}
.ruler-v {
  width: 18px;
  height: 100%;
  grid-row: 2 / 4;
  border-right: 1px solid #666;
}
.ruler-h text,
.ruler-v text {
  font-family: "Open Sans", sans-serif;
  font-size: 11px;
}
.canvas {
  position: relative;
}
.page {
  position: absolute;
  left: 615px;
  top: 16px;
  width: 615px;
  height: 869px;
  border: 1px solid #0f0;
}
.vscroll {
  display: flex;
  flex-direction: column;
  justify-content: flex-end;
  align-items: center;
  padding-bottom: 3px;
  background: #f0f0f0;
}
.hscroll {
  grid-column: 2 / 4;
  display: flex;
  justify-content: space-between;
  align-items: center;
  padding: 0 20px 0 3px;
  background: #f0f0f0;
}
.statusbar {
  height: 19px;
  margin: 2px 0 0;
  display: flex;
  border: 1px solid #a58a65;
  background: #e9dfca;
}
.statusbar span {
  padding-left: 3px;
  line-height: 18px;
  border-left: 1px solid #a58a65;
  white-space: nowrap;
}
.statusbar .msg {
  flex: 1;
  padding-left: 1px;
  border-left: 0;
}
.s98 { width: 98px; }
.s95 { width: 95px; }
.s76 { width: 76px; }
.s30 { width: 30px; }
.s31 { width: 31px; }
.s73 { width: 73px; }

/* floating palettes */
.panel {
  position: absolute;
  z-index: 2;
  display: flex;
  flex-direction: column;
  color: #2a1c08;
  background: linear-gradient(90deg, #d6caad, #d9cdb2 12%, #e9dfca 48%, #e9dfca 60%, #d8ccb0 88%, #d6caad);
  border: 1px solid #000;
  border-radius: 0 11px 0 11px;
  box-shadow: inset 0 0 0 1px #f8f4ea;
}
.panel > header {
  position: relative;
  height: 26px;
  flex: none;
  display: flex;
  align-items: center;
  gap: 5px;
  padding: 2px 7px 0 8px;
  overflow: hidden;
  border-top-right-radius: 10px;
}
.wave {
  position: absolute;
  left: 1px;
  top: 1px;
  width: 100%;
  height: 25px;
}
.panel h2 {
  position: relative;
  margin-right: auto;
  line-height: 20px;
}
.panel > header button {
  position: relative;
  margin-top: -4px;
}
.panel > header button svg {
  width: 13px;
  height: 13px;
}
.panel input[type="text"],
.combo {
  min-width: 0;
  height: 19px;
  padding: 0 3px;
  font: inherit;
  color: #000;
  background: #f0f0f0;
  border: 1px solid;
  border-color: #a58a65 #e4dac4 #e4dac4 #a58a65;
  border-radius: 0;
  box-shadow: inset 1px 1px 0 #000;
}
.panel input.live {
  background: #fff;
}
.panel label {
  white-space: nowrap;
}
.dim {
  color: #8f8a80;
}
.panel input[type="checkbox"] {
  appearance: none;
  flex: none;
  width: 8px;
  height: 8px;
  margin: 0;
  background: #fff;
  border: solid #333;
  border-width: 1px 0 0 1px;
  box-shadow: -1px -1px 0 #a58a65, 1px 1px 0 #f4efe2;
}
.panel input[type="checkbox"]:disabled {
  background: #d9ceb4;
}
.panel input[type="checkbox"]:checked {
  background: linear-gradient(135deg, transparent 50%, #222 50%, #222 68%, transparent 68%) #c8baa0;
}
.grip {
  position: absolute;
  right: 3px;
  bottom: 3px;
  width: 11px;
  height: 11px;
}
.fs {
  width: 42px;
  height: 42px;
}
.btn {
  height: 19px;
  background: linear-gradient(#dccf9c, #e6dcc0);
  border: 1px solid #a09670;
  border-radius: 0 7px 0 7px;
}

/* tools */
.tools {
  left: 35px;
  top: 82px;
  width: 103px;
  height: 409px;
}
.tools > header {
  height: 21px;
}
.tool-grid {
  display: grid;
  grid-template-columns: repeat(3, 32px);
  grid-auto-rows: 32px;
  padding-left: 4px;
}
.tool-grid button {
  position: relative;
}
.tool-grid button svg {
  width: 28px;
  height: 28px;
}
.tool-grid .on {
  background: radial-gradient(#b9b092, #9a9278);
  border-radius: 0 8px 0 8px;
}
.tool-grid i {
  position: absolute;
  right: 2px;
  bottom: 1px;
  border: 3px solid #ff9a10;
  border-top-color: transparent;
  border-left-color: transparent;
}

/* text settings */
.text-panel {
  left: 456px;
  top: 80px;
  width: 360px;
  height: 80px;
}
.text-row {
  display: flex;
  justify-content: space-between;
  align-items: flex-start;
  padding: 2px 18px 0 6px;
}
.combo {
  appearance: none;
  background:
    linear-gradient(45deg, transparent 45%, #707070 45%, #707070 60%, transparent 60%) right 10px center / 6px 6px no-repeat,
    linear-gradient(-45deg, transparent 45%, #707070 45%, #707070 60%, transparent 60%) right 5px center / 6px 6px no-repeat,
    linear-gradient(#fff, #fff) right 1px center / 17px 100% no-repeat,
    #f0f0f0;
}
.font {
  width: 221px;
  height: 23px;
}
.style {
  width: 90px;
  height: 20px;
}
.fields {
  justify-content: flex-end;
  gap: 18px;
}
.fields label {
  display: flex;
  align-items: center;
  gap: 6px;
}
.fields label:last-child {
  margin-left: 11px;
}
.fields input {
  width: 45px;
}
.fields label:nth-child(2) input {
  width: 49px;
}

/* LWM */
.lwm {
  right: 696px;
  top: 0;
  width: 216px;
  height: 80px;
}
.lwm-body {
  display: flex;
  gap: 5px;
  padding: 2px 1px 0 9px;
}
.mode {
  width: 100px;
  height: 42px;
  flex: none;
  display: flex;
  align-items: center;
  background: #f0f0f0;
  border: 2px solid;
  border-color: #8a8a8a #fff #fff #8a8a8a;
}
.mode select {
  appearance: none;
  flex: 1;
  min-width: 0;
  height: 38px;
  padding-left: 4px;
  font: inherit;
  color: #808080;
  background:
    linear-gradient(135deg, #999 50%, transparent 50%) right 4px center / 4px 4px no-repeat,
    linear-gradient(-135deg, #999 50%, transparent 50%) right 8px center / 4px 4px no-repeat,
    linear-gradient(90deg, #fff 1px, transparent 1px) right / 17px 100% no-repeat;
  border: 0;
}
.pairs {
  flex: 1;
  min-width: 0;
  padding-top: 3px;
}
.pairs label {
  display: flex;
  align-items: center;
  gap: 3px;
  margin-bottom: 2px;
}
.pairs input {
  flex: 1;
}

/* transform */
.transform {
  right: 480px;
  top: 0;
  width: 216px;
  height: 80px;
}
.xywh {
  display: grid;
  grid-template-columns: 11px 82px 13px 83px;
  gap: 1px 2px;
  align-items: center;
  padding: 6px 0 0 7px;
}

/* stroke and fill */
.stroke {
  right: 264px;
  top: 0;
  width: 216px;
  height: 80px;
}
.stroke-grid {
  display: grid;
  grid-template-columns: 54px 60px 24px repeat(3, 20px);
  gap: 3px 1px;
  align-items: center;
  padding: 3px 0 0 6px;
}
.join {
  width: 14px;
  height: 14px;
  color: #7a7468;
}

/* plates */
.plates {
  right: -6px;
  top: 48px;
  width: 270px;
  height: 160px;
}
.plates > header {
  padding-right: 5px;
}
.plates-top {
  display: flex;
  padding: 4px 10px 0 5px;
}
.checks {
  display: grid;
  grid-template-columns: repeat(3, 48px);
  grid-template-rows: 21px 21px;
  margin-left: 27px;
}
.checks label {
  display: flex;
  align-items: center;
  gap: 8px;
}
.plates .current {
  width: 35px;
  height: 43px;
  margin-left: auto;
  background: #3b383f;
  border: 1px solid #e8e4da;
}
.inks {
  display: grid;
  grid-template-columns: 15px 17px 80px 73px 60px;
  gap: 1px 2px;
  align-items: center;
  padding: 4px 0 0 6px;
}
.inks button {
  height: 15px;
  font-family: "DejaVu Sans", sans-serif;
  font-weight: bold;
  font-size: 9px;
  background: #a8946f;
  border: 2px solid;
  border-color: #7a6848 #c8b890 #c8b890 #7a6848;
}
.chip {
  height: 17px;
  border: 1px solid #f4f0e6;
}
.inks .num {
  margin-left: 6px;
  width: 53px;
  text-align: right;
}
.cyan { background: #00a2e8; }
.magenta { background: #ef3e96; }
.yellow { background: #fffb2e; }
.black { background: #3b383f; }
.white { background: #fff; }
.inks input[type="range"] {
  appearance: none;
  width: 73px;
  height: 12px;
  margin: 0;
  background: none;
}
.inks input[type="range"]::-webkit-slider-runnable-track {
  height: 5px;
  background: #f8f2e0;
  border: 1px solid #7a6a48;
}
.inks input[type="range"]::-webkit-slider-thumb {
  appearance: none;
  width: 9px;
  height: 9px;
  margin-top: -3px;
  background: radial-gradient(circle at 35% 35%, #fff0b8, #c8a040);
  border: 1px solid #80683a;
  border-radius: 50%;
}
.expand {
  position: absolute;
  right: 5px;
  top: 111px;
  width: 6px;
  height: 10px;
}

/* colours and patterns */
.colors {
  right: 16px;
  top: 248px;
  width: 224px;
  height: 160px;
}
.swatch-box {
  height: 50px;
  margin: 3px 8px 0 8px;
  display: flex;
  flex-direction: column;
  justify-content: space-between;
  background: #fff;
  border: 1px solid #777;
  border-color: #777 #fff #fff #777;
}
.swatches {
  display: flex;
  align-self: flex-start;
  gap: 2px;
  padding: 1px;
  background: #000;
}
.swatches button,
.swatches svg {
  width: 18px;
  height: 18px;
}
.swatch-scroll {
  height: 17px;
  display: flex;
  justify-content: space-between;
  align-items: center;
  padding: 0 4px;
  background: #f0f0f0;
}
.colors-bottom {
  display: flex;
  align-items: flex-start;
  padding: 9px 0 0 5px;
}
.colors-bottom fieldset {
  width: 60px;
  height: 44px;
  margin: -4px 2px 0 5px;
  padding: 0 0 0 6px;
  border: 1px solid #a09670;
  border-bottom-color: transparent;
  border-radius: 0 10px 0 6px;
}
.colors-bottom legend {
  padding: 0;
  margin-left: -5px;
}
.colors-bottom label {
  display: flex;
  align-items: center;
  gap: 6px;
}
.stack {
  width: 38px;
  display: flex;
  flex-direction: column;
  gap: 1px;
}

/* layers */
.layers {
  right: 16px;
  top: 448px;
  width: 224px;
  height: 304px;
}
.layers > header {
  height: 24px;
  padding-top: 4px;
}
.layers h2 {
  margin-right: 1px;
}
.tab {
  position: relative;
  width: 61px;
  height: 19px;
  margin-right: auto;
  line-height: 20px;
  text-align: center;
  background: rgba(210, 204, 184, 0.8);
  border: 1px solid #a09670;
  border-top: 0;
  border-radius: 0 0 0 6px;
}
.layer-list {
  flex: 1;
  margin: 0 4px 0 4px;
  background: #fff;
  border: 1px solid #777;
  border-right-color: #fff;
}
.layer {
  height: 20px;
  display: flex;
  align-items: center;
  gap: 3px;
  padding: 0 2px;
  background: #8080ff;
}
.layer button {
  width: 16px;
  height: 16px;
  background: #fff;
  border: 1px solid #000;
}
.mark {
  width: 11px;
  height: 10px;
  margin-left: auto;
  border: 2px solid #d03060;
}
.layer-buttons {
  display: grid;
  grid-template-columns: repeat(4, 1fr);
  gap: 2px;
  padding: 1px 15px 3px 5px;
}

/* taskbar */
.taskbar {
  height: 40px;
  flex: none;
  display: flex;
  color: #fff;
  background: #1b1d1e;
}
.taskbar > button {
  width: 49px;
  height: 40px;
}
.taskbar > button svg {
  width: 24px;
  height: 24px;
}
.taskbar .current {
  background: #4b4d4f;
}
.taskbar .current,
.taskbar .running {
  box-shadow: inset 0 -2px 0 #76b9ed;
}
.logo {
  font-family: "Open Sans", sans-serif;
  font-size: 12px;
  font-weight: bold;
}
.cmd {
  font-family: "Liberation Mono", monospace;
  font-size: 7px;
  fill: #fff;
}
.tray {
  margin-left: auto;
  display: flex;
  align-items: center;
  gap: 8px;
  padding-right: 25px;
}
.s16 {
  width: 16px;
  height: 16px;
}
.up {
  margin-left: 18px;
}
.note {
  margin-left: 8px;
}
.lang {
  font-family: "Liberation Mono", monospace;
}
.ime {
  font-family: "Open Sans", sans-serif;
  font-size: 20px;
}
.tray time {
  font-family: "Open Sans", sans-serif;
  line-height: 19px;
  text-align: center;
  margin-left: 6px;
}

/* input method bar */
.ime-bar {
  position: absolute;
  right: 0;
  bottom: 40px;
  z-index: 3;
  height: 22px;
  display: flex;
  align-items: center;
  gap: 6px;
  background: #fff;
  border-top: 1px solid #ccc;
  color: #1e7fe0;
  font-family: "Open Sans", sans-serif;
  font-size: 20px;
  font-weight: bold;
}
.ime-bar svg {
  width: 28px;
  height: 28px;
  margin: -4px 0 0 -8px;
}
.ime-bar span {
  padding-right: 4px;
}

/* community stamp */
.stamp {
  position: absolute;
  right: 2px;
  bottom: 0;
  z-index: 4;
  display: flex;
  align-items: center;
  gap: 8px;
}
.stamp svg {
  width: 32px;
  height: 30px;
}
.stamp div {
  display: flex;
  flex-direction: column;
}
.stamp b {
  font-family: "Noto Sans CJK TC", sans-serif;
  font-size: 21px;
  line-height: 24px;
  color: rgba(190, 125, 60, 0.9);
}
.stamp small {
  font-size: 12px;
  line-height: 12px;
  font-weight: bold;
  color: #8c8c8c;
}
```
